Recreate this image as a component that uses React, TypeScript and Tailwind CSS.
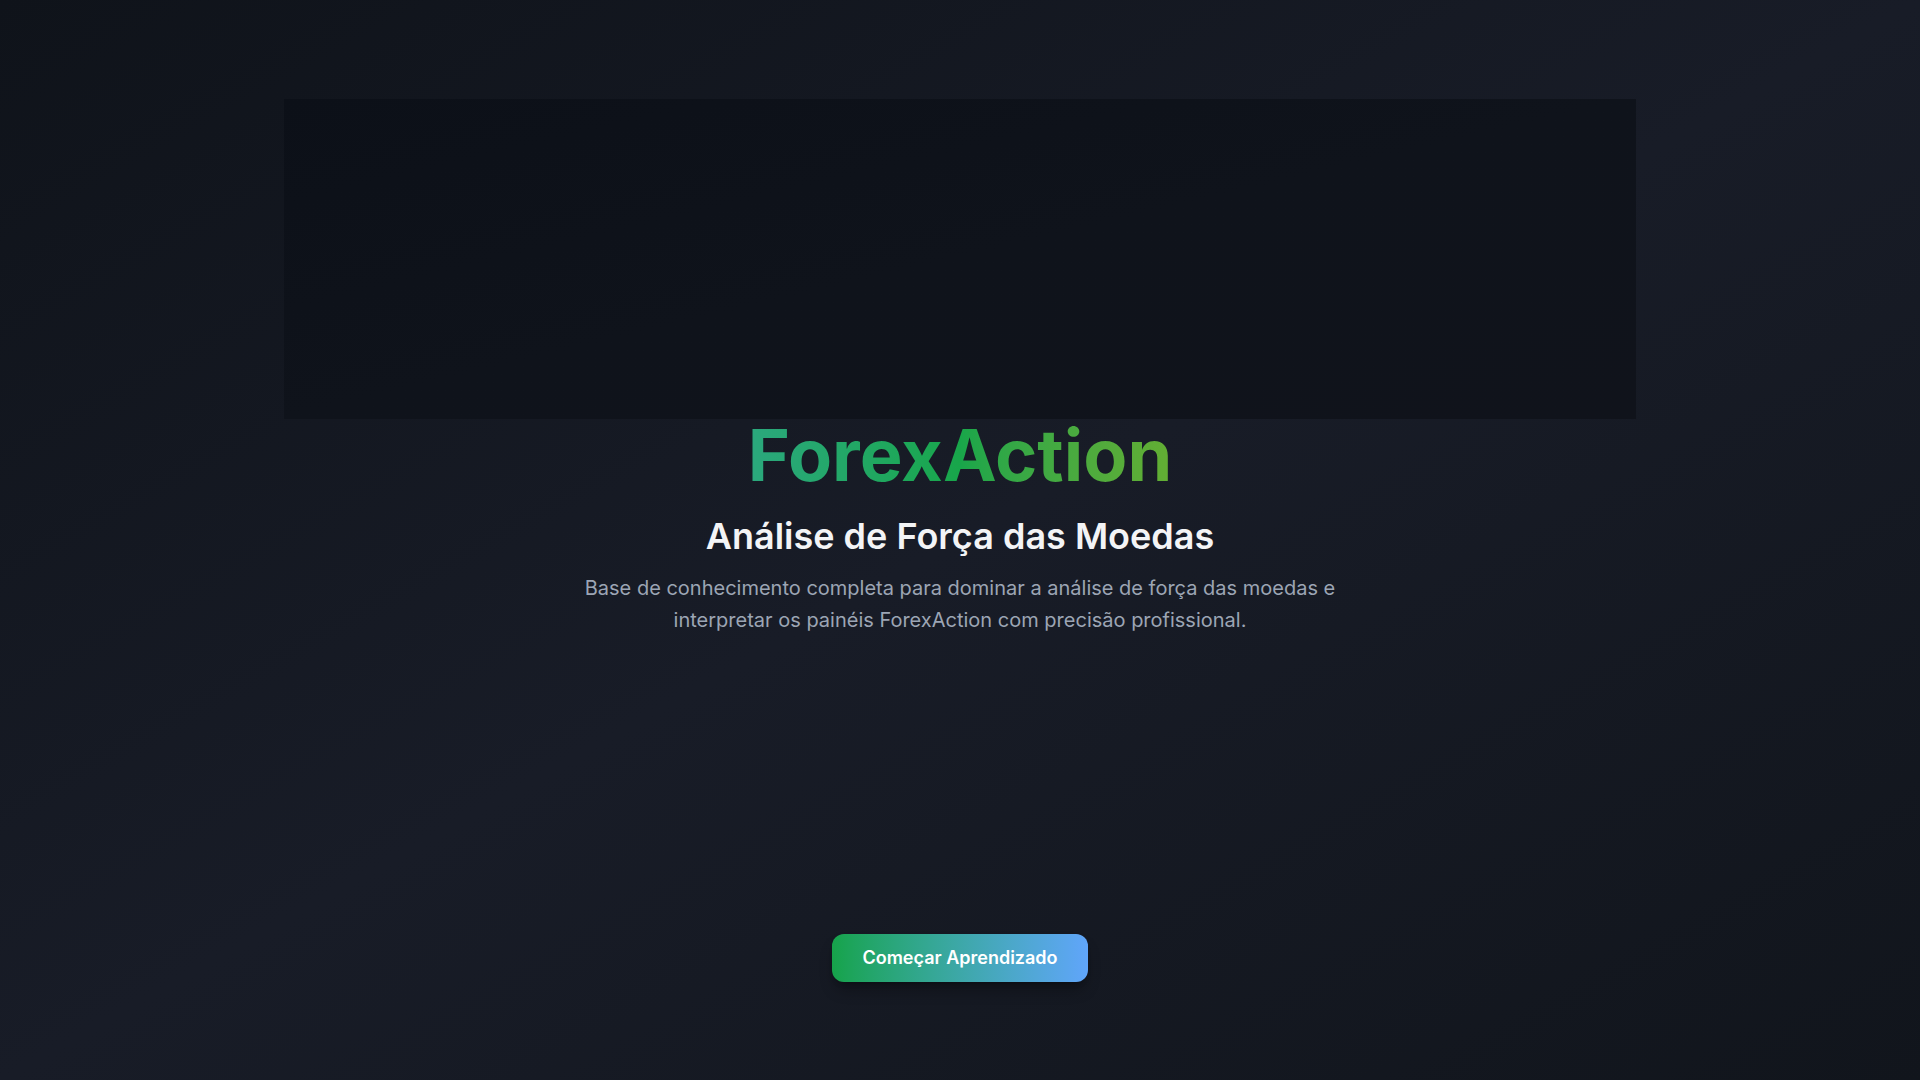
export default function App() {
  return (
    <div
      className="min-h-screen w-full bg-gradient-to-br from-[#0f131a] via-[#181c27] to-[#11151c] text-white"
      style={{ fontFamily: "Inter, 'Noto Sans', sans-serif" }}
    >
      <div className="flex flex-col items-center pt-[99px] pb-24">
        {/* Hero banner */}
        <div className="h-[320px] w-[1352px] bg-gradient-to-br from-[#0c1018] via-[#0f131b] to-[#10131b]" />

        <h1 className="bg-gradient-to-r from-[#2ba87d] via-[#18a64a] to-[#63ae33] bg-clip-text text-7xl leading-none font-bold text-transparent">
          ForexAction
        </h1>

        <h2 className="mt-[25px] text-4xl font-semibold text-gray-100">
          Análise de Força das Moedas
        </h2>

        <p className="mt-[16px] max-w-3xl text-center text-xl leading-8 text-[#9ca5b4]">
          Base de conhecimento completa para dominar a análise de força das moedas e
          interpretar os painéis ForexAction com precisão profissional.
        </p>

        <button className="mt-[298px] rounded-xl bg-gradient-to-r from-[#16a34a] to-[#60a5fa] px-[30px] py-2.5 text-lg font-semibold text-white shadow-lg shadow-black/30">
          Começar Aprendizado
        </button>
      </div>
    </div>
  );
}
